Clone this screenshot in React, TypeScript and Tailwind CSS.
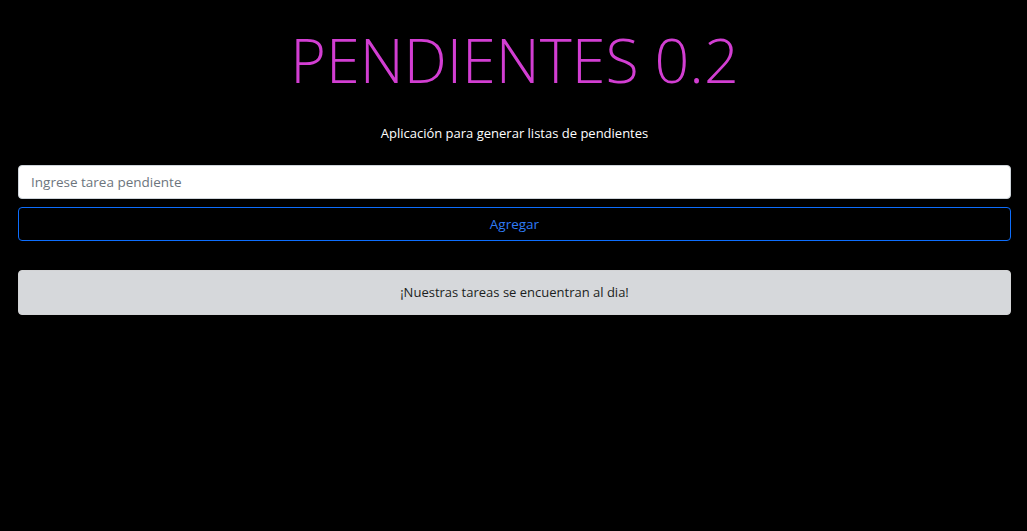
export default function App() {
  return (
    <div
      className="min-h-[531px] bg-black pl-[18px] pr-[16px] pt-[22px]"
      style={{ fontFamily: '"Open Sans", "Noto Sans", sans-serif' }}
    >
      <h1 className="text-center text-[61px] font-light leading-[76px] text-[#d23ed2]">
        PENDIENTES 0.2
      </h1>
      <p className="mt-[25px] text-center text-[13px] leading-[20px] text-white">
        Aplicación para generar listas de pendientes
      </p>
      <div className="mt-[22px] flex flex-col gap-[8px]">
        <input
          className="h-[34px] w-full rounded-[4px] border border-[#ced4da] bg-white px-[12px] text-[13.5px] text-[#212529] outline-none placeholder:text-[#6c757d]"
          placeholder="Ingrese tarea pendiente"
        />
        <button className="h-[34px] w-full rounded-[4px] border border-[#0d6efd] bg-black text-[13.5px] text-[#2f7bf5]">
          Agregar
        </button>
      </div>
      <div className="mt-[29px] flex h-[45px] items-center justify-center rounded-[4px] border border-[#d3d4d6] bg-[#d6d8db] text-[13px] text-[#1b1e21]">
        ¡Nuestras tareas se encuentran al dia!
      </div>
    </div>
  );
}
